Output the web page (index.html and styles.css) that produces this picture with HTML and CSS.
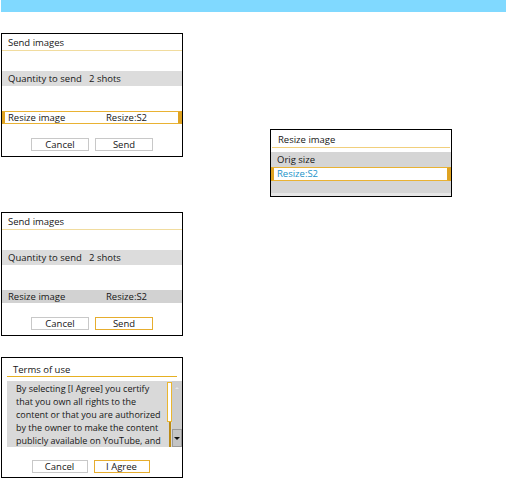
FILE: index.html
```html
<!DOCTYPE html>
<html>
<head>
<meta charset="utf-8">
<link rel="stylesheet" href="styles.css">
</head>
<body>
<div class="topbar"></div>
<div class="page">
  <div class="left">
    <div class="screen s1">
      <div class="title">Send images</div>
      <div class="band q"><span class="lq">Quantity to send</span>2 shots</div>
      <div class="band r sel"><span class="lr">Resize image</span>Resize:S2</div>
      <div class="btns">
        <div class="btn">Cancel</div>
        <div class="btn">Send</div>
      </div>
    </div>
    <div class="screen s2">
      <div class="title">Send images</div>
      <div class="band q"><span class="lq">Quantity to send</span>2 shots</div>
      <div class="band r dark"><span class="lr">Resize image</span>Resize:S2</div>
      <div class="btns">
        <div class="btn">Cancel</div>
        <div class="btn focus">Send</div>
      </div>
    </div>
    <div class="screen s3">
      <div class="title">Terms of use</div>
      <div class="terms">
        <div class="terms-text">By selecting [I Agree] you certify<br>that you own all rights to the<br>content or that you are authorized<br>by the owner to make the content<br>publicly available on YouTube, and</div>
        <div class="thumbcol"><div class="thumb"></div><div class="track"></div></div>
        <div class="scrollcol">
          <div class="up"></div>
          <div class="downbox"><div class="down"></div></div>
        </div>
      </div>
      <div class="btns b3">
        <div class="btn">Cancel</div>
        <div class="btn focus">I Agree</div>
      </div>
    </div>
  </div>
  <div class="right">
    <div class="screen dlg">
      <div class="title">Resize image</div>
      <div class="list">
        <div class="opt">Orig size</div>
        <div class="opt cur">Resize:S2</div>
        <div class="opt empty"></div>
        <div class="foot"></div>
      </div>
    </div>
  </div>
</div>
</body>
</html>
```

FILE: styles.css
```css
* { box-sizing: border-box; }
body {
  margin: 0;
  background: #fff;
  font-family: "Open Sans", "Noto Sans", sans-serif;
  font-size: 9.5px;
  color: #161616;
}
.topbar { height: 12px; margin-left: 1px; background: #80d9ff; }
.page { display: flex; align-items: flex-start; padding-left: 1px; }
.left { display: flex; flex-direction: column; width: 182px; }
.right { margin-left: 87px; margin-top: 117px; }
.screen { width: 182px; border: 1px solid #000; background: #fff; }
.s1 { margin-top: 21px; }
.s2 { margin-top: 55px; }
.s3 { margin-top: 21px; }

.title {
  padding: 2px 0 0 6px;
  line-height: 14px;
  border-bottom: 1px solid #f1dc9e;
  white-space: nowrap;
}
.band {
  height: 15px;
  line-height: 15px;
  background: #dcdcdc;
  padding-left: 6px;
  white-space: nowrap;
}
.q { margin-top: 20px; }
.r { margin-top: 25px; height: 13px; line-height: 13px; }
.r.dark { background: #d2d2d2; }
.r.sel {
  background: #fff;
  border-top: 1px solid #e9b233;
  border-bottom: 1px solid #e9b233;
  border-left: 3px solid #dfa322;
  border-right: 4px solid #dfa322;
  padding-left: 3px;
  line-height: 11px;
}
.lq { display: inline-block; width: 81px; }
.lr { display: inline-block; width: 98px; }

.btns {
  margin-top: 14px;
  padding-bottom: 5px;
  display: flex;
  justify-content: center;
  gap: 6px;
}
.btn {
  width: 58px;
  height: 13px;
  line-height: 11px;
  border: 1px solid #c8c8c8;
  text-align: center;
  background: #fff;
}
.btn.focus { border-color: #e6ad2e; }

.s3 .title {
  margin: 0 5px;
  padding: 6px 0 0 6px;
  line-height: 12px;
  border-bottom: 1px solid #e6b022;
}
.terms { margin: 4px 0 0 5px; display: flex; height: 66px; }
.terms-text {
  width: 160px;
  background: #d9d9d9;
  padding: 1px 0 0 9px;
  font-size: 9px;
  line-height: 13px;
  overflow: hidden;
  white-space: nowrap;
}
.thumbcol {
  width: 5px;
  background: #d9d9d9;
  display: flex;
  flex-direction: column;
}
.thumb {
  height: 40px;
  margin-top: 1px;
  border: 1px solid #eab630;
  background: #fff;
}
.track { flex: 1; margin-left: 2px; width: 2px; background: #bb8a14; }
.scrollcol {
  width: 10px;
  background: #cdcdcd;
  display: flex;
  flex-direction: column;
  justify-content: space-between;
  align-items: center;
}
.up {
  margin-top: 6px;
  width: 0; height: 0;
  border-left: 2.5px solid transparent;
  border-right: 2.5px solid transparent;
  border-bottom: 2.5px solid #e6e6e6;
}
.downbox {
  width: 10px;
  height: 18px;
  border: 1px solid #9a9a9a;
  background: #c4c4c4;
  display: flex;
  align-items: center;
  justify-content: center;
}
.down {
  width: 0; height: 0;
  border-left: 3px solid transparent;
  border-right: 3px solid transparent;
  border-top: 3px solid #111;
}
.b3 { margin-top: 13px; padding-bottom: 4px; padding-right: 3px; }
.b3 .btn { width: 56px; }

.dlg .title {
  margin: 0 1px;
  padding: 3px 0 0 6px;
  line-height: 14px;
  border-bottom: 1px solid #f1cf7c;
}
.list { margin-top: 4px; }
.opt {
  height: 15px;
  line-height: 15px;
  background: #d5d5d5;
  padding-left: 6px;
}
.opt.cur {
  height: 14px;
  line-height: 12px;
  background: #fff;
  color: #1b93c9;
  border-top: 1px solid #e9b233;
  border-bottom: 1px solid #e9b233;
  border-left: 3px solid #dfa322;
  border-right: 4px solid #dfa322;
  padding-left: 3px;
}
.opt.empty { height: 12px; }
.foot { height: 3px; background: #e6e6e6; }
```
